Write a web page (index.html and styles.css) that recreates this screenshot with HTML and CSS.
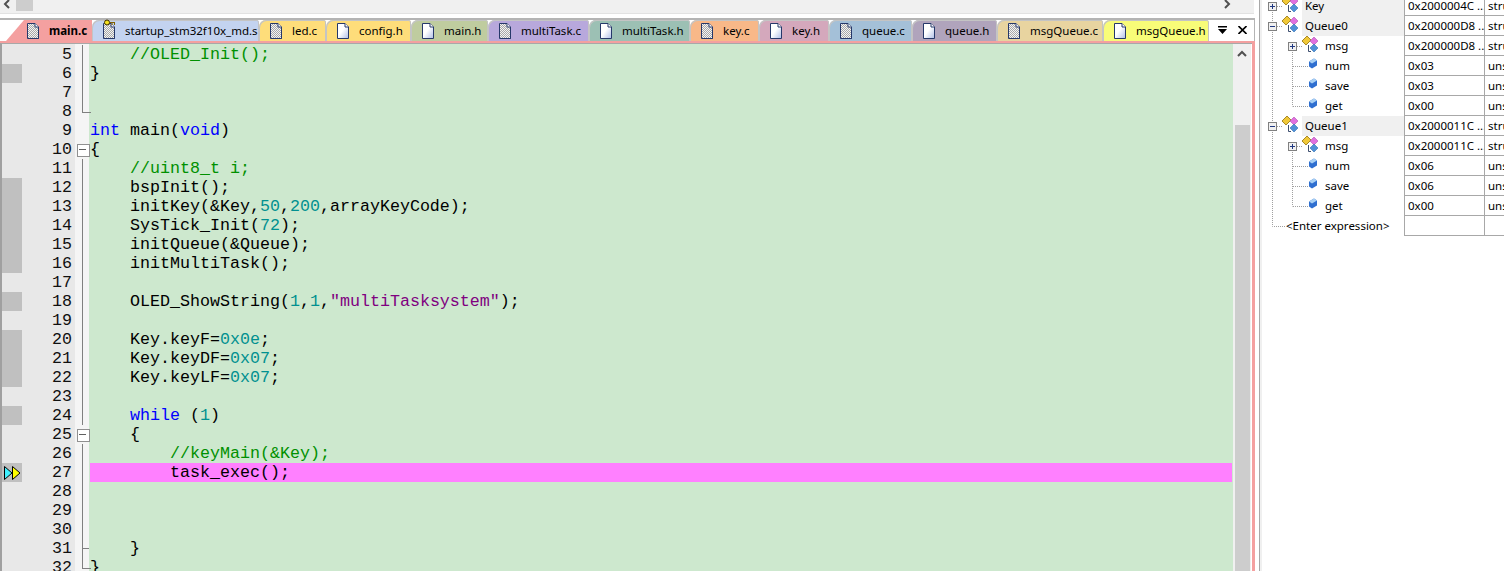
FILE: index.html
```html
<!DOCTYPE html>
<html lang="en">
<head>
<meta charset="utf-8">
<title>main.c</title>
<link rel="stylesheet" href="styles.css">
</head>
<body>
<svg class="defs" aria-hidden="true">
  <defs>
    <pattern id="dither" width="2" height="2" patternUnits="userSpaceOnUse">
      <rect width="2" height="2" fill="#f4f4f4"/><rect width="1" height="1" fill="#a8a8a8"/><rect x="1" y="1" width="1" height="1" fill="#a8a8a8"/>
    </pattern>
    <linearGradient id="page" x1="0" y1="0" x2="1" y2="1"><stop offset="0.45" stop-color="#fff"/><stop offset="1" stop-color="#aebde6"/></linearGradient>
    <symbol id="doc-c" viewBox="0 0 13 16"><path d="M1.5.5H9L12.5 4V15.5H1.5Z" fill="url(#dither)" stroke="#26386a"/><path d="M9 .5V4H12.5" fill="#fff" stroke="#26386a"/><path d="M12.5 4V15.5H2" fill="none" stroke="#26386a"/></symbol>
    <symbol id="doc-h" viewBox="0 0 13 16"><path d="M1.5.5H9L12.5 4V15.5H1.5Z" fill="url(#page)" stroke="#26386a"/><path d="M9 .5V4H12.5" fill="#fff" stroke="#26386a"/></symbol>
    <symbol id="struct" viewBox="0 0 22 20"><path d="M4 5 9 0 13 4 8 9Z" fill="#f0c838" stroke="#a88828"/><path d="M16 1 20 5 16 9 12 5Z" fill="#e070e0" stroke="#b050b0" stroke-width=".6"/><path d="M16 8 20 12 16 16 12 12Z" fill="#5090d8" stroke="#3070b0" stroke-width=".6"/><path d="M10.5 9V15.5H13" fill="none" stroke="#405070"/></symbol>
    <symbol id="leaf" viewBox="0 0 10 11"><path d="M1 3.5 6 .5 9 2.5V7.5L4 10.500 1 8.500Z" fill="#2f6fd0"/><path d="M1 3.500 6 .5 9 2.500 4 5.500Z" fill="#a8d0f4"/></symbol>
    <symbol id="plus" viewBox="0 0 9 9"><rect x=".5" y=".5" width="8" height="8" fill="#f0f0f0" stroke="#808080"/><path d="M2 4.500H7M4.500 2V7" stroke="#203880"/></symbol>
    <symbol id="minus" viewBox="0 0 9 9"><rect x=".5" y=".5" width="8" height="8" fill="#f0f0f0" stroke="#808080"/><path d="M2 4.500H7" stroke="#203880"/></symbol>
  </defs>
</svg>
<main class="editor-pane">
  <div class="hscroll">
    <svg class="chev" viewBox="0 0 8 10"><path d="M6 1 2 5 6 9" fill="none" stroke="#505050" stroke-width="2"/></svg>
    <div class="hthumb"></div>
    <svg class="chev chev-right" viewBox="0 0 8 10"><path d="M2 1 6 5 2 9" fill="none" stroke="#505050" stroke-width="2"/></svg>
  </div>
  <div class="tabstrip">
    <div class="tab t-main"><svg class="ficon"><use href="#doc-c"/></svg><span class="active-label">main.c</span></div>
    <div class="tab t-startup"><svg class="ficon ficon-key" viewBox="0 0 13 20"><use href="#doc-c" y="4" width="13" height="16"/><circle cx="5" cy="3.500" r="2.500" fill="#f4e020" stroke="#403000"/><path d="M7.500 3.500H13M10 3.500V6M12.500 3.500V6" stroke="#806000" fill="none"/></svg><span>startup_stm32f10x_md.s</span></div>
    <div class="tab t-led"><svg class="ficon"><use href="#doc-c"/></svg><span>led.c</span></div>
    <div class="tab t-config"><svg class="ficon"><use href="#doc-h"/></svg><span>config.h</span></div>
    <div class="tab t-mainh"><svg class="ficon"><use href="#doc-h"/></svg><span>main.h</span></div>
    <div class="tab t-mtc"><svg class="ficon"><use href="#doc-c"/></svg><span>multiTask.c</span></div>
    <div class="tab t-mth"><svg class="ficon"><use href="#doc-h"/></svg><span>multiTask.h</span></div>
    <div class="tab t-keyc"><svg class="ficon"><use href="#doc-c"/></svg><span>key.c</span></div>
    <div class="tab t-keyh"><svg class="ficon"><use href="#doc-h"/></svg><span>key.h</span></div>
    <div class="tab t-qc"><svg class="ficon"><use href="#doc-c"/></svg><span>queue.c</span></div>
    <div class="tab t-qh"><svg class="ficon"><use href="#doc-h"/></svg><span>queue.h</span></div>
    <div class="tab t-mqc"><svg class="ficon"><use href="#doc-c"/></svg><span>msgQueue.c</span></div>
    <div class="tab t-mqh"><svg class="ficon"><use href="#doc-h"/></svg><span>msgQueue.h</span></div>
    <div class="tab-tools">
      <svg class="tool" viewBox="0 0 9 8"><path d="M0 0H9V1.500H0ZM0 3H9L4.500 8Z" fill="#000"/></svg>
      <svg class="tool" viewBox="0 0 9 8"><path d="M.5 0 8.500 8M8.500 0 .5 8" stroke="#000" stroke-width="1.600"/></svg>
    </div>
  </div>
  <div class="frame">
    <div class="editor">
      <div class="gutter">
        <div class="gl"><i class="mark"></i><b>5</b></div>
        <div class="gl"><i class="mark on"></i><b>6</b></div>
        <div class="gl"><i class="mark"></i><b>7</b></div>
        <div class="gl"><i class="mark"></i><b>8</b></div>
        <div class="gl"><i class="mark"></i><b>9</b></div>
        <div class="gl"><i class="mark"></i><b>10</b></div>
        <div class="gl"><i class="mark"></i><b>11</b></div>
        <div class="gl"><i class="mark on"></i><b>12</b></div>
        <div class="gl"><i class="mark on"></i><b>13</b></div>
        <div class="gl"><i class="mark on"></i><b>14</b></div>
        <div class="gl"><i class="mark on"></i><b>15</b></div>
        <div class="gl"><i class="mark on"></i><b>16</b></div>
        <div class="gl"><i class="mark"></i><b>17</b></div>
        <div class="gl"><i class="mark on"></i><b>18</b></div>
        <div class="gl"><i class="mark"></i><b>19</b></div>
        <div class="gl"><i class="mark on"></i><b>20</b></div>
        <div class="gl"><i class="mark on"></i><b>21</b></div>
        <div class="gl"><i class="mark on"></i><b>22</b></div>
        <div class="gl"><i class="mark"></i><b>23</b></div>
        <div class="gl"><i class="mark on"></i><b>24</b></div>
        <div class="gl"><i class="mark"></i><b>25</b></div>
        <div class="gl"><i class="mark"></i><b>26</b></div>
        <div class="gl"><i class="mark on"><svg class="debug" viewBox="0 0 18 16"><path d="M1.500 1.500 9 8 1.500 14.500Z" fill="#40f0ff" stroke="#000"/><path d="M9.500 1.500 17 8 9.500 14.500Z" fill="#ffff00" stroke="#000"/></svg></i><b>27</b></div>
        <div class="gl"><i class="mark"></i><b>28</b></div>
        <div class="gl"><i class="mark"></i><b>29</b></div>
        <div class="gl"><i class="mark"></i><b>30</b></div>
        <div class="gl"><i class="mark"></i><b>31</b></div>
        <div class="gl"><i class="mark"></i><b>32</b></div>
      </div>
      <div class="fold">
        <div class="fr v"></div><div class="fr v"></div><div class="fr v"></div><div class="fr end"></div>
        <div class="fr"></div><div class="fr box"></div>
        <div class="fr v"></div><div class="fr v"></div><div class="fr v"></div><div class="fr v"></div><div class="fr v"></div><div class="fr v"></div><div class="fr v"></div><div class="fr v"></div><div class="fr v"></div><div class="fr v"></div><div class="fr v"></div><div class="fr v"></div><div class="fr v"></div><div class="fr v"></div>
        <div class="fr box"></div>
        <div class="fr v"></div><div class="fr v"></div><div class="fr v"></div><div class="fr v"></div><div class="fr v"></div>
        <div class="fr tick"></div><div class="fr end"></div>
      </div>
      <div class="code">
<div class="ln cm">    //OLED_Init();</div>
<div class="ln">}</div>
<div class="ln"></div>
<div class="ln"></div>
<div class="ln"><span class="kw">int</span> main(<span class="kw">void</span>)</div>
<div class="ln">{</div>
<div class="ln cm">    //uint8_t i;</div>
<div class="ln">    bspInit();</div>
<div class="ln">    initKey(&amp;Key,<span class="nm">50</span>,<span class="nm">200</span>,arrayKeyCode);</div>
<div class="ln">    SysTick_Init(<span class="nm">72</span>);</div>
<div class="ln">    initQueue(&amp;Queue);</div>
<div class="ln">    initMultiTask();</div>
<div class="ln"></div>
<div class="ln">    OLED_ShowString(<span class="nm">1</span>,<span class="nm">1</span>,<span class="st">"multiTasksystem"</span>);</div>
<div class="ln"></div>
<div class="ln">    Key.keyF=<span class="nm">0x0e</span>;</div>
<div class="ln">    Key.keyDF=<span class="nm">0x07</span>;</div>
<div class="ln">    Key.keyLF=<span class="nm">0x07</span>;</div>
<div class="ln"></div>
<div class="ln">    <span class="kw">while</span> (<span class="nm">1</span>)</div>
<div class="ln">    {</div>
<div class="ln cm">        //keyMain(&amp;Key);</div>
<div class="ln cur">        task_exec();</div>
<div class="ln"></div>
<div class="ln"></div>
<div class="ln"></div>
<div class="ln">    }</div>
<div class="ln">}</div>
      </div>
      <div class="vscroll">
        <svg class="vchev" viewBox="0 0 10 8"><path d="M1 6 5 2 9 6" fill="none" stroke="#505050" stroke-width="2"/></svg>
        <div class="vthumb"></div>
      </div>
    </div>
  </div>
</main>
<aside class="watch">
  <div class="wrow">
    <div class="tree"><svg class="tw top" viewBox="0 0 40 20"><path class="dot" d="M10.500 14V20M15 10.500H20"/><use href="#plus" x="6" y="6" width="9" height="9"/><use href="#struct" x="16" y="0" width="22" height="20"/></svg><span class="name hl">Key</span></div>
    <div class="val">0x2000004C ...</div><div class="typ">struct</div>
  </div>
  <div class="wrow">
    <div class="tree"><svg class="tw top" viewBox="0 0 40 20"><path class="dot" d="M10.500 0V6M10.500 14V20M15 10.500H20"/><use href="#minus" x="6" y="6" width="9" height="9"/><use href="#struct" x="16" y="0" width="22" height="20"/></svg><span class="name hl">Queue0</span></div>
    <div class="val">0x200000D8 ...</div><div class="typ">struct</div>
  </div>
  <div class="wrow">
    <div class="tree"><svg class="tw child" viewBox="0 0 60 20"><path class="dot" d="M10.500 0V20M30.500 14V20M35 10.500H40"/><use href="#plus" x="26" y="6" width="9" height="9"/><use href="#struct" x="36" y="0" width="22" height="20"/></svg><span class="name">msg</span></div>
    <div class="val">0x200000D8 ...</div><div class="typ">struct</div>
  </div>
  <div class="wrow">
    <div class="tree"><svg class="tw child" viewBox="0 0 60 20"><path class="dot" d="M10.500 0V20M30.500 0V20M31 10.500H46"/><use href="#leaf" x="46" y="2" width="10" height="11"/></svg><span class="name">num</span></div>
    <div class="val">0x03</div><div class="typ">unsigned char</div>
  </div>
  <div class="wrow">
    <div class="tree"><svg class="tw child" viewBox="0 0 60 20"><path class="dot" d="M10.500 0V20M30.500 0V20M31 10.500H46"/><use href="#leaf" x="46" y="2" width="10" height="11"/></svg><span class="name">save</span></div>
    <div class="val">0x03</div><div class="typ">unsigned char</div>
  </div>
  <div class="wrow">
    <div class="tree"><svg class="tw child" viewBox="0 0 60 20"><path class="dot" d="M10.500 0V20M30.500 0V10.500M31 10.500H46"/><use href="#leaf" x="46" y="2" width="10" height="11"/></svg><span class="name">get</span></div>
    <div class="val">0x00</div><div class="typ">unsigned char</div>
  </div>
  <div class="wrow">
    <div class="tree"><svg class="tw top" viewBox="0 0 40 20"><path class="dot" d="M10.500 0V6M10.500 14V20M15 10.500H20"/><use href="#minus" x="6" y="6" width="9" height="9"/><use href="#struct" x="16" y="0" width="22" height="20"/></svg><span class="name hl">Queue1</span></div>
    <div class="val">0x2000011C ...</div><div class="typ">struct</div>
  </div>
  <div class="wrow">
    <div class="tree"><svg class="tw child" viewBox="0 0 60 20"><path class="dot" d="M10.500 0V20M30.500 14V20M35 10.500H40"/><use href="#plus" x="26" y="6" width="9" height="9"/><use href="#struct" x="36" y="0" width="22" height="20"/></svg><span class="name">msg</span></div>
    <div class="val">0x2000011C ...</div><div class="typ">struct</div>
  </div>
  <div class="wrow">
    <div class="tree"><svg class="tw child" viewBox="0 0 60 20"><path class="dot" d="M10.500 0V20M30.500 0V20M31 10.500H46"/><use href="#leaf" x="46" y="2" width="10" height="11"/></svg><span class="name">num</span></div>
    <div class="val">0x06</div><div class="typ">unsigned char</div>
  </div>
  <div class="wrow">
    <div class="tree"><svg class="tw child" viewBox="0 0 60 20"><path class="dot" d="M10.500 0V20M30.500 0V20M31 10.500H46"/><use href="#leaf" x="46" y="2" width="10" height="11"/></svg><span class="name">save</span></div>
    <div class="val">0x06</div><div class="typ">unsigned char</div>
  </div>
  <div class="wrow">
    <div class="tree"><svg class="tw child" viewBox="0 0 60 20"><path class="dot" d="M10.500 0V20M30.500 0V10.500M31 10.500H46"/><use href="#leaf" x="46" y="2" width="10" height="11"/></svg><span class="name">get</span></div>
    <div class="val">0x00</div><div class="typ">unsigned char</div>
  </div>
  <div class="wrow">
    <div class="tree"><svg class="tw enter" viewBox="0 0 24 20"><path class="dot" d="M10.500 0V10.500H24"/></svg><span class="name enter-name">&lt;Enter expression&gt;</span></div>
    <div class="val"></div><div class="typ"></div>
  </div>
</aside>
</body>
</html>
```

FILE: styles.css
```css
* { box-sizing: border-box; }
html, body { margin: 0; height: 571px; overflow: hidden; background: #fff; }
body { display: flex; font-family: "Noto Sans", "Open Sans", sans-serif; color: #000; }
.defs { position: absolute; width: 0; height: 0; }

.editor-pane { width: 1255px; height: 571px; display: flex; flex-direction: column; flex: none; }

.hscroll { height: 14px; flex: none; display: flex; align-items: flex-start; background: #f0f0f0; border-bottom: 1px solid #e2e2e2; margin-right: 1px; padding-left: 3px; }
.chev { width: 8px; height: 10px; margin-top: -1px; flex: none; }
.hthumb { width: 17px; height: 11px; margin-left: 5px; background: #cdcdcd; }
.chev-right { margin-left: auto; margin-right: 23px; }

.tabstrip { margin-top: 4px; height: 23px; flex: none; display: flex; border-top: 2px solid #b4b4b4; border-right: 1px solid #b4b4b4; background: #fff; }
.tab { height: 21px; display: flex; align-items: center; gap: 10px; padding-left: 10px; font-size: 11.5px; flex: none; border-top-left-radius: 7px; border-top-right-radius: 3px; box-shadow: inset 1px 1px 0 #c4c4c4, inset -1px 0 0 #c4c4c4; white-space: nowrap; }
.ficon { width: 13px; height: 16px; flex: none; }
.ficon-key { height: 20px; margin-top: -4px; }
.t-main { width: 92px; padding-left: 26px; background: #f4a0a0; clip-path: polygon(24px 0, 100% 0, 100% 100%, 6px 100%); box-shadow: none; border-radius: 0; font-weight: 700; }
.active-label { position: relative; }
.active-label::after { content: ""; position: absolute; left: -4px; right: -4px; top: 18px; height: 2px; background: #000; }
.t-startup { width: 167px; background: #c3d3f0; }
.t-led { width: 67px; background: #fedd7a; }
.t-config { width: 85px; background: #fedd7a; }
.t-mainh { width: 77px; background: #bfcc9f; }
.t-mtc { width: 101px; background: #b8a8dc; }
.t-mth { width: 101px; background: #9cc0b4; }
.t-keyc { width: 69px; background: #f8b888; }
.t-keyh { width: 70px; background: #d4a8bc; }
.t-qc { width: 83px; background: #a4c0d8; }
.t-qh { width: 85px; background: #b0a4bc; }
.t-mqc { width: 106px; background: #e8d4a0; }
.t-mqh { width: 106px; background: #f8fc78; }
.tab-tools { display: flex; gap: 11px; padding: 6px 0 0 9px; align-items: flex-start; }
.tool { width: 9px; height: 8px; flex: none; }

.frame { flex: 1; min-height: 0; border-top: 2px solid #f4a0a0; border-right: 3px solid #f4a0a0; }
.editor { height: 100%; display: flex; overflow: hidden; border-left: 2px solid #a0a0a0; border-top: 1px solid #a8a8a8; }

.gutter { width: 73px; flex: none; background: #e8e8e8; padding-top: 1px; }
.gl { height: 19px; display: flex; }
.mark { width: 20px; height: 19px; flex: none; display: flex; align-items: center; justify-content: center; }
.mark.on { background: #c0c0c0; }
.debug { width: 18px; height: 16px; }
.gl b { flex: 1; text-align: right; padding-right: 3px; font: 400 16.67px/19px "Liberation Mono", monospace; color: #101010; }

.fold { width: 14px; flex: none; background: #f5f5f5; padding-top: 1px; }
.fr { height: 19px; position: relative; }
.fr.v::before, .fr.tick::before { content: ""; position: absolute; left: 7px; top: 0; bottom: 0; width: 1px; background: #808080; }
.fr.end::before { content: ""; position: absolute; left: 7px; top: 0; height: 10px; width: 8px; border-left: 1px solid #808080; border-bottom: 1px solid #808080; }
.fr.tick::after { content: ""; position: absolute; left: 7px; top: 9px; width: 7px; height: 1px; background: #808080; }
.fr.box::before { content: ""; position: absolute; left: 2px; top: 4px; width: 11px; height: 11px; background: #fff; border: 1px solid #909090; }
.fr.box::after { content: ""; position: absolute; left: 4px; top: 9px; width: 7px; height: 1px; background: #606060; }

.code { flex: 1; min-width: 0; background: #cde8ce; padding: 1px 1px 0; font: 16.67px/19px "Liberation Mono", monospace; color: #000; overflow: hidden; }
.ln { height: 19px; white-space: pre; padding-left: 0; }
.cur { background: #ff80ff; }
.kw { color: #0000ff; }
.cm { color: #009000; }
.nm { color: #009090; }
.st { color: #800080; }

.vscroll { width: 18px; flex: none; background: #f0f0f0; padding: 6px 1px 0; margin-right: 1px; display: flex; flex-direction: column; align-items: center; }
.vchev { width: 10px; height: 8px; flex: none; }
.vthumb { width: 15px; height: 446px; margin-top: 67px; flex: none; background: #cdcdcd; }

.watch { margin-left: 4px; width: 245px; height: 575px; margin-top: -4px; border-left: 1px solid #a8a8a8; padding-left: 2px; box-shadow: inset 2px 0 0 #f0f0f0; flex: none; overflow: hidden; font-size: 11.5px; }
.wrow { height: 20px; display: flex; }
.tree { width: 142px; flex: none; display: flex; }
.tw { height: 20px; flex: none; }
.tw.top { width: 40px; }
.tw.child { width: 60px; }
.tw.enter { width: 24px; }
.dot { fill: none; stroke: #a0a0a0; stroke-dasharray: 1 1; }
.name { flex: 1; line-height: 20px; padding-left: 3px; white-space: nowrap; }
.hl { background: #f0f0f0; }
.enter-name { padding-left: 0; }
.val, .typ { height: 20px; line-height: 19px; padding-left: 3px; border-left: 1px solid #a8a8a8; border-bottom: 1px solid #a8a8a8; white-space: nowrap; overflow: hidden; }
.val { width: 80px; flex: none; }
.typ { flex: 1; }
```
